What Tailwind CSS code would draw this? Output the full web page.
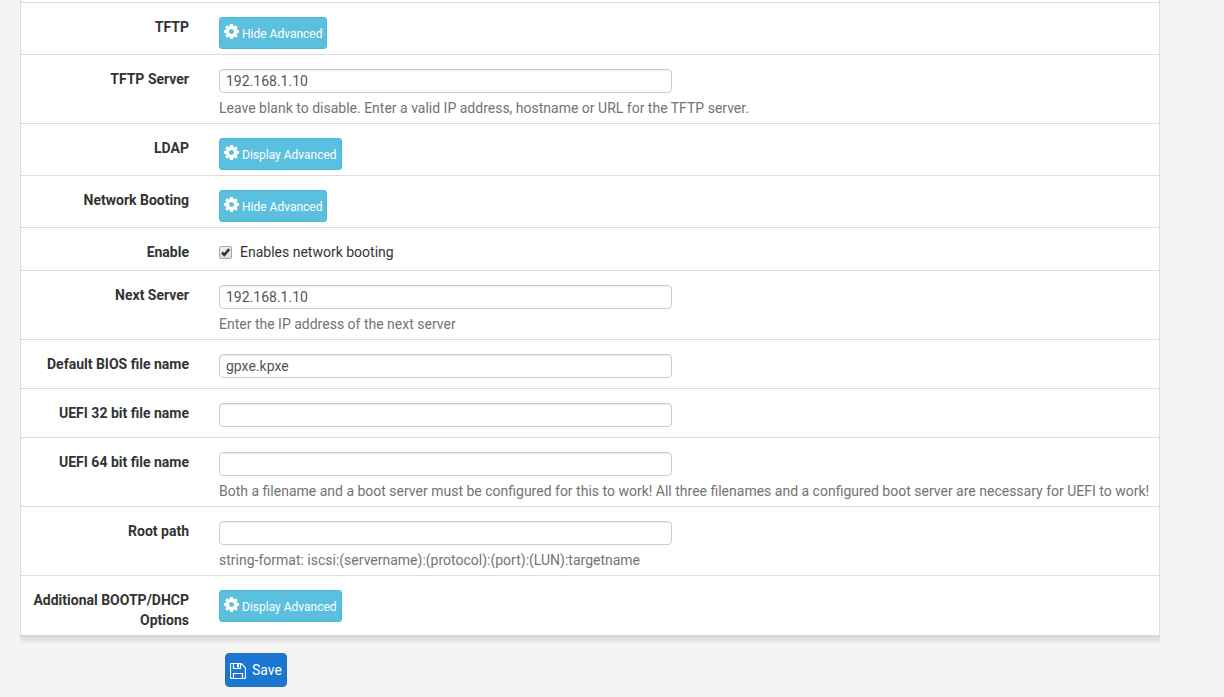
<!DOCTYPE html>
<html lang="en">
<head>
    <meta charset="UTF-8">
    <meta name="viewport" content="width=device-width, initial-scale=1.0">
    <title>Services - DHCP Server</title>
    <script src="https://cdn.jsdelivr.net/npm/@tailwindcss/browser@4"></script>
</head>
<body class="bg-[#f4f4f4] font-[Roboto,sans-serif] text-sm leading-5 text-[#333]">
    <!-- Shared icons -->
    <svg class="hidden">
        <symbol id="cog" viewBox="128 128 1536 1536">
            <path fill="currentColor" d="M1152 896q0-106-75-181t-181-75-181 75-75 181 75 181 181 75 181-75 75-181zm512-109v222q0 12-8 23t-20 13l-185 28q-19 54-39 91 35 50 107 138 10 12 10 25t-9 23q-27 37-99 108t-94 71q-12 0-26-9l-138-108q-44 23-91 38-16 136-29 186-7 28-36 28h-222q-14 0-24.500-8.500t-11.500-21.500l-28-184q-49-16-90-37l-141 107q-10 9-25 9-14 0-25-11-126-114-165-168-7-10-7-23 0-12 8-23 15-21 51-66.500t54-70.500q-27-50-41-99l-183-27q-13-2-21-12.500t-8-23.500v-222q0-12 8-23t19-13l186-28q14-46 39-92-40-57-107-138-10-12-10-24 0-10 9-23 26-36 98.500-107.500t94.500-71.500q13 0 26 10l138 107q44-23 91-38 16-136 29-186 7-28 36-28h222q14 0 24.500 8.500t11.500 21.500l28 184q49 16 90 37l142-107q9-9 24-9 13 0 25 10 129 119 165 170 7 8 7 22 0 12-8 23-15 21-51 66.500t-54 70.500q26 50 41 98l183 28q13 2 21 12.500t8 23.500z"/>
        </symbol>
    </svg>

    <form>
        <!-- DHCP options panel -->
        <div class="ml-5 mr-16 pt-0.5 bg-white border-x border-[#ddd]">
            <div class="flex border-t border-[#ddd] pt-3.5 pb-[5px]">
                <div class="w-[168px] shrink-0 pl-2 text-right font-bold">TFTP</div>
                <div class="flex-1 pl-[30px]">
                    <button type="button" class="flex h-8 items-center gap-[3px] rounded-[3px] border border-[#46b8da] bg-[#5bc0de] px-1 text-xs text-white">
                        <svg class="mb-[3px] size-[15px]"><use href="#cog"/></svg>
                        <span class="pt-0.5">Hide Advanced</span>
                    </button>
                </div>
            </div>

            <div class="flex border-t border-[#ddd] pt-3.5 pb-[5px]">
                <label for="tftp" class="w-[168px] shrink-0 pl-2 text-right font-bold">TFTP Server</label>
                <div class="flex-1 pl-[30px]">
                    <input id="tftp" type="text" value="192.168.1.10" class="block h-6 w-full max-w-[453px] rounded border border-[#ccc] bg-white px-1.5 text-[#555] shadow-[inset_0_1px_1px_rgba(0,0,0,0.075)]">
                    <p class="mt-[5px] text-[#737373]">Leave blank to disable. Enter a valid IP address, hostname or URL for the TFTP server.</p>
                </div>
            </div>

            <div class="flex border-t border-[#ddd] pt-3.5 pb-[5px]">
                <div class="w-[168px] shrink-0 pl-2 text-right font-bold">LDAP</div>
                <div class="flex-1 pl-[30px]">
                    <button type="button" class="flex h-8 items-center gap-[3px] rounded-[3px] border border-[#46b8da] bg-[#5bc0de] px-1 text-xs text-white">
                        <svg class="mb-[3px] size-[15px]"><use href="#cog"/></svg>
                        <span class="pt-0.5">Display Advanced</span>
                    </button>
                </div>
            </div>

            <div class="flex border-t border-[#ddd] pt-3.5 pb-[5px]">
                <div class="w-[168px] shrink-0 pl-2 text-right font-bold">Network Booting</div>
                <div class="flex-1 pl-[30px]">
                    <button type="button" class="flex h-8 items-center gap-[3px] rounded-[3px] border border-[#46b8da] bg-[#5bc0de] px-1 text-xs text-white">
                        <svg class="mb-[3px] size-[15px]"><use href="#cog"/></svg>
                        <span class="pt-0.5">Hide Advanced</span>
                    </button>
                </div>
            </div>

            <div class="flex border-t border-[#ddd] pt-3.5 pb-2">
                <div class="w-[168px] shrink-0 pl-2 text-right font-bold">Enable</div>
                <div class="flex-1 pl-[30px]">
                    <label class="flex items-center gap-2">
                        <span class="grid">
                            <input type="checkbox" checked class="peer col-start-1 row-start-1 size-[13px] appearance-none rounded-xs border border-[#a6a6a6] bg-linear-to-b from-[#eee] to-[#ddd]">
                            <svg class="pointer-events-none col-start-1 row-start-1 hidden size-[13px] peer-checked:block" viewBox="0 0 13 13"><path d="M3 6.500 5.300 8.900 10.200 3.200" fill="none" stroke="#333" stroke-width="2.600"/></svg>
                        </span>
                        Enables network booting
                    </label>
                </div>
            </div>

            <div class="flex border-t border-[#ddd] pt-3.5 pb-[5px]">
                <label for="nextserver" class="w-[168px] shrink-0 pl-2 text-right font-bold">Next Server</label>
                <div class="flex-1 pl-[30px]">
                    <input id="nextserver" type="text" value="192.168.1.10" class="block h-6 w-full max-w-[453px] rounded border border-[#ccc] bg-white px-1.5 text-[#555] shadow-[inset_0_1px_1px_rgba(0,0,0,0.075)]">
                    <p class="mt-[5px] text-[#737373]">Enter the IP address of the next server</p>
                </div>
            </div>

            <div class="flex border-t border-[#ddd] pt-3.5 pb-2.5">
                <label for="filename" class="w-[168px] shrink-0 pl-2 text-right font-bold">Default BIOS file name</label>
                <div class="flex-1 pl-[30px]">
                    <input id="filename" type="text" value="gpxe.kpxe" class="block h-6 w-full max-w-[453px] rounded border border-[#ccc] bg-white px-1.5 text-[#555] shadow-[inset_0_1px_1px_rgba(0,0,0,0.075)]">
                </div>
            </div>

            <div class="flex border-t border-[#ddd] pt-3.5 pb-2.5">
                <label for="filename32" class="w-[168px] shrink-0 pl-2 text-right font-bold">UEFI 32 bit file name</label>
                <div class="flex-1 pl-[30px]">
                    <input id="filename32" type="text" class="block h-6 w-full max-w-[453px] rounded border border-[#ccc] bg-white px-1.5 text-[#555] shadow-[inset_0_1px_1px_rgba(0,0,0,0.075)]">
                </div>
            </div>

            <div class="flex border-t border-[#ddd] pt-3.5 pb-[5px]">
                <label for="filename64" class="w-[168px] shrink-0 pl-2 text-right font-bold">UEFI 64 bit file name</label>
                <div class="flex-1 pl-[30px]">
                    <input id="filename64" type="text" class="block h-6 w-full max-w-[453px] rounded border border-[#ccc] bg-white px-1.5 text-[#555] shadow-[inset_0_1px_1px_rgba(0,0,0,0.075)]">
                    <p class="mt-[5px] text-[#737373]">Both a filename and a boot server must be configured for this to work! All three filenames and a configured boot server are necessary for UEFI to work!</p>
                </div>
            </div>

            <div class="flex border-t border-[#ddd] pt-3.5 pb-[5px]">
                <label for="rootpath" class="w-[168px] shrink-0 pl-2 text-right font-bold">Root path</label>
                <div class="flex-1 pl-[30px]">
                    <input id="rootpath" type="text" class="block h-6 w-full max-w-[453px] rounded border border-[#ccc] bg-white px-1.5 text-[#555] shadow-[inset_0_1px_1px_rgba(0,0,0,0.075)]">
                    <p class="mt-[5px] text-[#737373]">string-format: iscsi:(servername):(protocol):(port):(LUN):targetname</p>
                </div>
            </div>

            <div class="flex border-t border-[#ddd] pt-3.5 pb-[5px]">
                <div class="w-[168px] shrink-0 pl-2 text-right font-bold">Additional BOOTP/DHCP Options</div>
                <div class="flex-1 pl-[30px]">
                    <button type="button" class="flex h-8 items-center gap-[3px] rounded-[3px] border border-[#46b8da] bg-[#5bc0de] px-1 text-xs text-white">
                        <svg class="mb-[3px] size-[15px]"><use href="#cog"/></svg>
                        <span class="pt-0.5">Display Advanced</span>
                    </button>
                </div>
            </div>
        </div>
        <!-- Panel shadow, bottom edge only -->
        <div class="ml-5 mr-16 h-2.5 bg-linear-to-b from-[#d6d6d6] to-[#f4f4f4]"></div>

        <!-- Save -->
        <div class="pt-2 pl-[225px]">
            <button type="submit" class="flex h-[34px] items-center gap-1.5 rounded border border-[#2e6da4] bg-[#1976d2] px-1 text-white">
                <svg class="mt-0.5 size-4" viewBox="0 0 16 16" fill="none" stroke="currentColor">
                    <path d="M1.500.5H10.500Q11.200.5 11.700 1L15 4.300Q15.500 4.800 15.500 5.500V14.500Q15.500 15.500 14.500 15.500H1.500Q.5 15.500.5 14.500V1.500Q.5.5 1.500.5Z" stroke-width="1.200"/>
                    <path d="M3.500.5V5.500H10.500V.5M3.500 15.500V10.500H12.500V15.500" stroke-width="1.200"/>
                    <path d="M7 1H9V4.500H7Z" fill="currentColor" stroke="none"/>
                </svg>
                Save
            </button>
        </div>
    </form>
</body>
</html>
